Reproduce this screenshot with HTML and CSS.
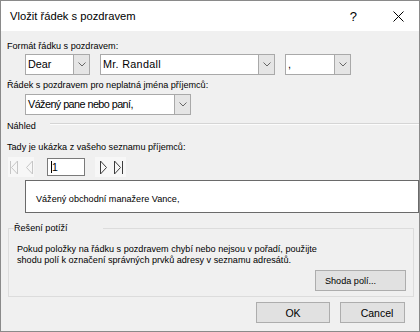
FILE: index.html
```html
<!DOCTYPE html>
<html lang="cs">
<head>
  <meta charset="UTF-8">
  <title>Vložit řádek s pozdravem</title>
  <link rel="stylesheet" href="styles.css">
</head>
<body>

  <div class="dialog">
    <div class="titlebar">
      <span class="title">Vložit řádek s pozdravem</span>
      <span class="help">?</span>
      <svg class="close" width="11" height="11" viewBox="0 0 11 11">
        <path d="M0.5 0.5 L10.5 10.5 M10.5 0.5 L0.5 10.5" stroke="#000" stroke-width="1" fill="none"/>
      </svg>
    </div>

    <div class="content">
      <div class="label first">Formát řádku s pozdravem:</div>
      <div class="combo-row">
        <div class="combo dear"><span class="value">Dear</span><span class="drop"><svg width="8" height="5" viewBox="0 0 8 5"><path d="M0.5 0.5 L4 4 L7.5 0.5" stroke="#666" fill="none"/></svg></span></div>
        <div class="combo name"><span class="value">Mr. Randall</span><span class="drop"><svg width="8" height="5" viewBox="0 0 8 5"><path d="M0.5 0.5 L4 4 L7.5 0.5" stroke="#666" fill="none"/></svg></span></div>
        <div class="combo punct"><span class="value">,</span><span class="drop"><svg width="8" height="5" viewBox="0 0 8 5"><path d="M0.5 0.5 L4 4 L7.5 0.5" stroke="#666" fill="none"/></svg></span></div>
      </div>

      <div class="label second">Řádek s pozdravem pro neplatná jména příjemců:</div>
      <div class="combo-row tight">
        <div class="combo invalid"><span class="value">Vážený pane nebo paní,</span><span class="drop"><svg width="8" height="5" viewBox="0 0 8 5"><path d="M0.5 0.5 L4 4 L7.5 0.5" stroke="#666" fill="none"/></svg></span></div>
      </div>

      <div class="section">
        <span>Náhled</span>
        <div class="rule"></div>
      </div>

      <div class="label third">Tady je ukázka z vašeho seznamu příjemců:</div>
      <div class="nav">
        <span class="nav-btns back">
          <svg width="26" height="20" viewBox="0 0 26 20">
            <path d="M2.5 4 V17" stroke="#c6c6c6" fill="none"/>
            <path d="M9.5 4 V17 L3.5 10.5 Z" stroke="#c6c6c6" fill="none" stroke-linejoin="round"/>
            <path d="M24.5 4 V17 L18.5 10.5 Z" stroke="#c6c6c6" fill="none" stroke-linejoin="round"/>
          </svg>
        </span>
        <span class="record"><span class="caret"></span>1</span>
        <span class="nav-btns fwd">
          <svg width="31" height="20" viewBox="0 0 31 20">
            <path d="M5.5 4 V17 L11.5 10.5 Z" stroke="#3c3c3c" fill="none" stroke-linejoin="round"/>
            <path d="M19.5 4 V17 L25.5 10.5 Z" stroke="#3c3c3c" fill="none" stroke-linejoin="round"/>
            <path d="M27.5 4 V17" stroke="#3c3c3c" fill="none"/>
          </svg>
        </span>
      </div>

      <div class="preview">Vážený obchodní manažere Vance,</div>

      <fieldset class="group">
        <legend>Řešení potíží</legend>
        <p class="hint"> Pokud položky na řádku s pozdravem chybí nebo nejsou v pořadí, použijte<br>shodu polí k označení správných prvků adresy v seznamu adresátů.</p>
        <div class="group-actions">
          <button class="btn match">Shoda polí...</button>
        </div>
      </fieldset>

      <div class="actions">
        <button class="btn ok">OK</button>
        <button class="btn cancel">Cancel</button>
      </div>
    </div>
  </div>

</body>
</html>
```

FILE: styles.css
```css
* { box-sizing: border-box; }
body {
  margin: 0;
  font-family: 'Liberation Sans', Arial, sans-serif;
  font-size: 9.1px;
  color: #000;
}
.dialog {
  width: 420px;
  height: 332px;
  border: 1px solid #8a8a8a;
  background: #f0f0f0;
  display: flex;
  flex-direction: column;
}

/* title bar */
.titlebar {
  height: 30px;
  background: #fff;
  display: flex;
  align-items: center;
  padding: 1px 0 0 9px;
  line-height: 29px;
}
.title {
  flex: 1;
  font-size: 11.2px;
}
.help {
  font-size: 13px;
  margin-right: 36px;
}
.close {
  margin-right: 15px;
}

/* body */
.content {
  flex: 1;
  padding-left: 6px;
}
.label {
  line-height: 12px;
  white-space: nowrap;
}
.label.first { margin-top: 9px; }
.label.second { margin-top: 4px; }
.label.third { margin-top: 9px; }

.combo-row {
  display: flex;
  gap: 10px;
  margin: 2px 0 0 18px;
}
.combo-row.tight { margin-top: 3px; }
.combo {
  display: flex;
  height: 21px;
  background: #fff;
  border: 1px solid #a9a9a9;
}
.combo .value {
  flex: 1;
  padding-left: 2px;
  font-size: 10.8px;
  line-height: 19px;
  white-space: nowrap;
  overflow: hidden;
}
.combo .drop {
  width: 16px;
  background: #e5e5e5;
  border-left: 1px solid #a9a9a9;
  display: flex;
  align-items: center;
  justify-content: center;
}
.combo.dear { width: 65px; }
.combo.name { width: 175px; }
.combo.name .value { letter-spacing: 0.3px; }
.combo.punct { width: 66px; }
.combo.invalid { width: 166px; }
.combo.invalid .value { letter-spacing: -0.55px; }

.section {
  display: flex;
  align-items: flex-start;
  margin-top: 5px;
  line-height: 12px;
}
.section .rule {
  flex: 1;
  margin: 3px 0 0 14px;
  border-top: 1px solid #d5d5d5;
  border-bottom: 1px solid #fcfcfc;
}

/* record navigation */
.nav {
  display: flex;
  align-items: center;
  height: 20px;
  margin: 4px 0 0 1px;
}
.nav-btns {
  display: flex;
  height: 20px;
  background: #f7f7f7;
}
.record {
  width: 38px;
  height: 18px;
  margin: 0 10px 0 13px;
  background: #fff;
  border: 1px solid #7a7a7a;
  font-size: 10.5px;
  line-height: 16px;
  padding-left: 3px;
  display: flex;
  align-items: center;
}
.record .caret {
  width: 1px;
  height: 12px;
  background: #000;
}

.preview {
  margin: 3px 0 0 18px;
  height: 33px;
  background: #fff;
  border: 1px solid #6a6a6a;
  padding: 12px 0 0 10px;
  line-height: 12px;
  white-space: nowrap;
}

/* troubleshooting group */
.group {
  margin: 9px 0 0 1px;
  width: 406px;
  border: 1px solid #dcdcdc;
  padding: 0 7px 5px 5px;
  min-inline-size: 0;
}
.group legend {
  padding: 0 35px 0 0;
  line-height: 12px;
}
.hint {
  margin: 10px 0 0;
  padding-left: 3px;
  line-height: 11px;
  white-space: nowrap;
}
.group-actions {
  display: flex;
  justify-content: flex-end;
  margin-top: 4px;
}

.btn {
  height: 21px;
  background: #e1e1e1;
  border: 1px solid #adadad;
  font-family: inherit;
  color: #000;
  padding: 0;
}
.btn.match {
  width: 91px;
  font-size: 9.1px;
  text-align: left;
  padding-left: 9px;
}
.actions {
  display: flex;
  justify-content: flex-end;
  gap: 10px;
  margin: 5px 14px 0 0;
}
.btn.ok {
  width: 74px;
  font-size: 10.5px;
}
.btn.cancel {
  width: 65px;
  font-size: 10.5px;
  padding-left: 9px;
}
```
